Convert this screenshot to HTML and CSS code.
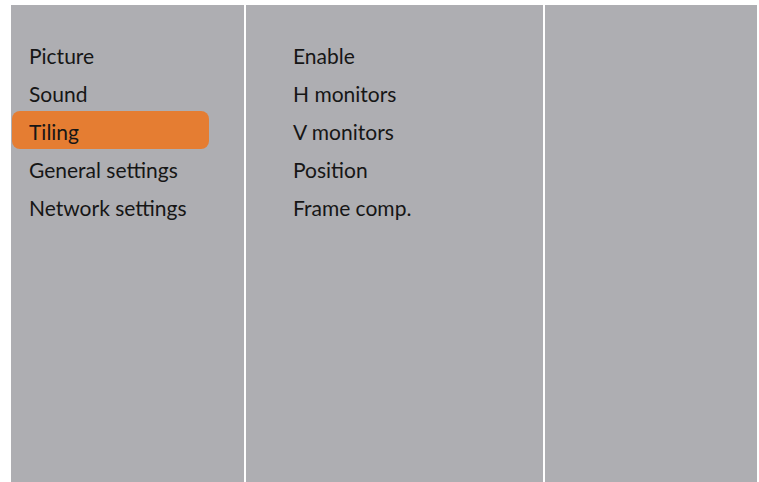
FILE: index.html
```html
<!DOCTYPE html>
<html lang="en">
<head>
  <meta charset="UTF-8" />
  <title>Tiling menu</title>
  <link rel="stylesheet" href="styles.css">
</head>
<body>
  <div class="osd">
    <!-- main menu -->
    <ul class="menu main">
      <li>Picture</li>
      <li>Sound</li>
      <li class="active">Tiling</li>
      <li>General settings</li>
      <li>Network settings</li>
    </ul>

    <!-- submenu -->
    <ul class="menu sub">
      <li>Enable</li>
      <li>H monitors</li>
      <li>V monitors</li>
      <li>Position</li>
      <li>Frame comp.</li>
    </ul>

    <!-- values -->
    <div class="menu values"></div>
  </div>
</body>
</html>
```

FILE: styles.css
```css
body {
  margin: 0;
  background: white;
  font-family: Lato, "Open Sans", sans-serif;
  color: #161616;
}

.osd {
  display: flex;
  gap: 2px;
  background: white;
  margin: 5px 2px 0 11px;
  height: 477px;
}

.menu {
  list-style: none;
  margin: 0;
  padding: 30px 0 0 0;
  background: #aeaeb2;
}

.menu li {
  height: 38px;
  line-height: 41px;
  font-size: 21px;
}

.main {
  width: 233px;
}

.main li {
  margin-left: 1px;
  width: 180px;
  padding-left: 17px;
  border-radius: 8px;
}

.main li.active {
  background: #e57d32;
}

.sub {
  width: 297px;
}

.sub li {
  padding-left: 47px;
}

.values {
  flex: 1;
}
```
